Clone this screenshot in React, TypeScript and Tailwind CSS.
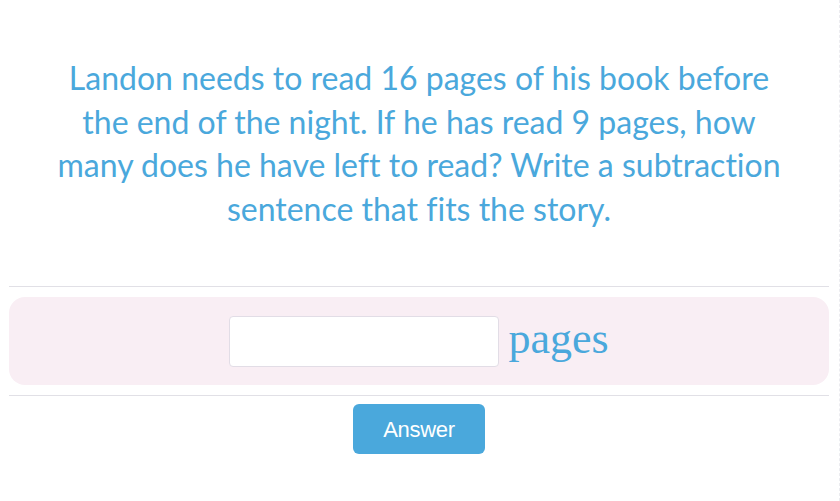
export default function App() {
  return (
    <div className="w-[840px] h-[501px] bg-white relative overflow-hidden">
      <div className="w-[840px] h-[501px] border-r border-dashed border-[#ececf0] pl-[9px] pr-[10px]">
        <p
          className="pt-[56px] text-center text-[32px] leading-[43.5px] text-[#4aa8dc] [font-variant-ligatures:none]"
          style={{ fontFamily: "Lato, 'Noto Sans', sans-serif" }}
        >
          Landon needs to read 16 pages of his book before
          <br />
          the end of the night. If he has read 9 pages, how
          <br />
          many does he have left to read? Write a subtraction
          <br />
          sentence that fits the story.
        </p>
        <div className="mt-[56px] h-px bg-[#e1e0e6]" />
        <div className="mt-[10px] h-[88px] rounded-[16px] bg-[#f9eef4] flex items-center justify-center gap-[9px]">
          <div className="w-[270px] h-[51px] rounded-[4px] border border-[#e2dde6] bg-white" />
          <span
            className="text-[44px] leading-none text-[#4aa8dc] -mt-[4px]"
            style={{ fontFamily: "'Liberation Serif', serif" }}
          >
            pages
          </span>
        </div>
        <div className="mt-[10px] h-px bg-[#e1e0e6]" />
        <div className="mt-[8px] flex justify-center">
          <button
            className="w-[132px] h-[50px] rounded-[6px] bg-[#4aa8dc] text-white text-[22px] tracking-[-0.3px]"
            style={{ fontFamily: "'Liberation Sans', Arial, sans-serif" }}
          >
            Answer
          </button>
        </div>
      </div>
    </div>
  );
}
